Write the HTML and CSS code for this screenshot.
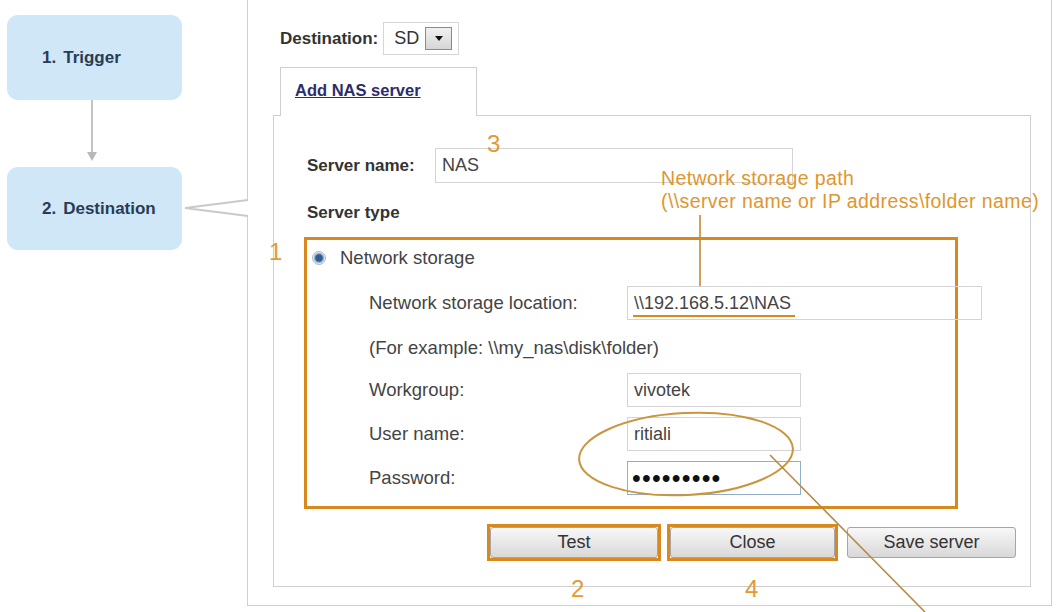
FILE: index.html
```html
<!DOCTYPE html>
<html>
<head>
<meta charset="utf-8">
<link rel="stylesheet" href="styles.css">
</head>
<body>
<div class="page">
  <aside class="flow">
    <div class="step step-1"><span class="step-num">1.</span>Trigger</div>
    <div class="flow-arrow"></div>
    <div class="step step-2"><span class="step-num">2.</span>Destination</div>
  </aside>

  <section class="panel">
    <div class="dest-row">
      <span class="label-b">Destination:</span>
      <span class="select"><span class="select-val">SD</span><span class="select-btn"><i class="caret"></i></span></span>
    </div>
    <div class="tabs"><div class="tab"><a href="#" class="tab-link">Add NAS server</a></div></div>
    <div class="tab-panel">
      <div class="server-row">
        <label class="label-b server-label">Server name:</label>
        <input class="field-input server-input" type="text" value="NAS" readonly>
      </div>
      <div class="label-b server-type">Server type</div>
      <div class="group">
        <div class="radio-row"><span class="radio"></span>Network storage</div>
        <div class="field-row row-location">
          <span class="field-label">Network storage location:</span>
          <input class="field-input location-input" type="text" value="\\192.168.5.12\NAS" readonly>
        </div>
        <div class="example">(For example: \\my_nas\disk\folder)</div>
        <div class="field-row row-workgroup">
          <span class="field-label">Workgroup:</span>
          <input class="field-input short-input" type="text" value="vivotek" readonly>
        </div>
        <div class="field-row row-user">
          <span class="field-label">User name:</span>
          <input class="field-input short-input" type="text" value="ritiali" readonly>
        </div>
        <div class="field-row row-pass">
          <span class="field-label">Password:</span>
          <div class="field-input short-input pass-input">•••••••••</div>
        </div>
      </div>
      <div class="buttons">
        <span class="mark mark-test"><button class="btn btn-test">Test</button></span>
        <span class="mark mark-close"><button class="btn btn-close">Close</button></span>
        <button class="btn btn-save">Save server</button>
      </div>
    </div>
  </section>

  <svg class="overlay" width="1062" height="612" viewBox="0 0 1062 612">
    <rect x="245" y="201" width="4" height="14" fill="#ffffff"/>
    <polyline points="248,200 185,208 248,216" fill="none" stroke="#c9c9c9" stroke-width="2"/>
    <line x1="700" y1="215" x2="700" y2="286" stroke="#c48a35" stroke-width="1.6"/>
    <line x1="633" y1="316" x2="795" y2="316" stroke="#d8881c" stroke-width="2"/>
    <ellipse cx="686" cy="454" rx="107" ry="41" transform="rotate(-3 686 454)" fill="none" stroke="#c9953f" stroke-width="2"/>
    <line x1="770" y1="455" x2="925" y2="612" stroke="#b98a45" stroke-width="1.6"/>
  </svg>

  <span class="anno anno-1">1</span>
  <span class="anno anno-2">2</span>
  <span class="anno anno-3">3</span>
  <span class="anno anno-4">4</span>
  <div class="callout">Network storage path<br>(\\server name or IP address\folder name)</div>
</div>
</body>
</html>
```
FILE: styles.css
```css
* { box-sizing: border-box; }

body {
  margin: 0;
  background: #ffffff;
  font-family: "Liberation Sans", Arial, sans-serif;
  color: #444444;
}

.page {
  position: relative;
  width: 1062px;
  height: 612px;
  display: flex;
  overflow: hidden;
}

/* ---------- flow chart ---------- */
.flow {
  width: 247px;
  flex: none;
  padding: 15px 0 0 7px;
  display: flex;
  flex-direction: column;
}

.step {
  width: 175px;
  height: 85px;
  background: #cfe7f7;
  border-radius: 11px;
  display: flex;
  align-items: center;
  padding-left: 35px;
  font-weight: bold;
  font-size: 17px;
  color: #2a3b55;
}

.step-2 { height: 83px; }

.step-num { margin-right: 7px; }

.flow-arrow {
  width: 175px;
  height: 67px;
  position: relative;
}

.flow-arrow::before {
  content: "";
  position: absolute;
  left: 84px;
  top: 0;
  width: 2px;
  height: 53px;
  background: #c4c4c4;
}

.flow-arrow::after {
  content: "";
  position: absolute;
  left: 80px;
  top: 52px;
  border-top: 9px solid #b9b9b9;
  border-left: 5px solid transparent;
  border-right: 5px solid transparent;
}

/* ---------- main panel ---------- */
.panel {
  width: 805px;
  height: 606px;
  flex: none;
  border: 1px solid #cfcfcf;
  border-top: none;
  padding: 22px 0 0 25px;
  display: flex;
  flex-direction: column;
}

.label-b {
  font-weight: bold;
  font-size: 17px;
  color: #333333;
}

.dest-row {
  display: flex;
  align-items: center;
  height: 33px;
  margin-left: 7px;
  gap: 5px;
}

.select {
  width: 76px;
  height: 33px;
  border: 1px solid #d6d6d6;
  display: flex;
  align-items: center;
  padding-left: 10px;
  gap: 6px;
}

.select-val {
  font-size: 18px;
  color: #333333;
  width: 25px;
}

.select-btn {
  width: 27px;
  height: 23px;
  border: 1px solid #8a8a8a;
  background: linear-gradient(#f0f0f0, #d6d6d6);
  display: flex;
  align-items: center;
  justify-content: center;
}

.caret {
  display: block;
  border-top: 5px solid #111111;
  border-left: 4px solid transparent;
  border-right: 4px solid transparent;
}

.tabs {
  display: flex;
  margin: 12px 0 -1px 7px;
  position: relative;
  z-index: 1;
}

.tab {
  width: 197px;
  height: 49px;
  border: 1px solid #cfcfcf;
  border-bottom: none;
  background: #ffffff;
  padding: 13px 0 0 14px;
}

.tab-link {
  font-weight: bold;
  font-size: 16.5px;
  color: #2c2d6b;
  text-decoration: underline;
}

.tab-panel {
  width: 758px;
  height: 472px;
  border: 1px solid #cfcfcf;
  padding: 0 0 0 33px;
  display: flex;
  flex-direction: column;
  align-items: flex-start;
}

.server-row {
  display: flex;
  align-items: center;
  height: 35px;
  margin-top: 32px;
}

.server-label { width: 128px; }

.field-input {
  flex: none;
  height: 34px;
  border: 1px solid #d4d4d4;
  background: transparent;
  font-family: "Liberation Sans", Arial, sans-serif;
  font-size: 18px;
  color: #444444;
  padding: 0 6px;
  outline: none;
  margin: 0;
}

.server-input {
  width: 358px;
  height: 35px;
}

.server-type {
  margin-top: 19px;
  line-height: 22px;
}

.group {
  margin: 13px 0 0 -3px;
  width: 654px;
  height: 272px;
  border: 3px solid #d8881c;
  padding: 8px 0 0 5px;
  display: flex;
  flex-direction: column;
  font-size: 18.5px;
  color: #444444;
}

.radio-row {
  display: flex;
  align-items: center;
  height: 20px;
}

.radio {
  width: 14px;
  height: 14px;
  border-radius: 50%;
  border: 1px solid #b0bac4;
  background: radial-gradient(circle, #2d5d94 0 3px, #6d8fb5 4px, #dfe5ec 5.5px);
  margin-right: 14px;
}

.field-row {
  display: flex;
  align-items: center;
  padding-left: 57px;
  height: 34px;
}

.field-label { width: 258px; flex: none; }

.row-location { margin-top: 18px; }
.row-workgroup { margin-top: 15px; }
.row-user { margin-top: 10px; }
.row-pass { margin-top: 10px; }

.location-input { width: 355px; }
.short-input { width: 174px; }

.pass-input {
  display: flex;
  align-items: center;
  border-color: #8fb0c8;
  color: #111111;
  font-size: 25px;
  letter-spacing: 1.2px;
  padding-left: 4px;
}

.example {
  margin-top: 18px;
  padding-left: 57px;
  line-height: 20px;
}

.buttons {
  display: flex;
  align-items: center;
  margin: 15px 0 0 180px;
}

.mark {
  display: flex;
  border: 3px solid #d8881c;
}

.mark-close { margin-left: 6px; }

.btn {
  height: 31px;
  border: 1px solid #a6a6a6;
  border-radius: 3px;
  background: linear-gradient(#f8f8f8, #e8e8e8 50%, #d8d8d8);
  font-family: "Liberation Sans", Arial, sans-serif;
  font-size: 18px;
  color: #333333;
  padding: 0;
  margin: 0;
}

.btn-test { width: 168px; }
.btn-close { width: 165px; }
.btn-save { width: 169px; margin-left: 9px; }

/* ---------- annotations ---------- */
.overlay {
  position: absolute;
  left: 0;
  top: 0;
  pointer-events: none;
}

.anno {
  position: absolute;
  color: #e39a33;
  font-size: 24px;
  line-height: 1;
}

.anno-1 { left: 269px; top: 240px; }
.anno-2 { left: 571px; top: 577px; }
.anno-3 { left: 487px; top: 132px; }
.anno-4 { left: 745px; top: 577px; }

.callout {
  position: absolute;
  left: 661px;
  top: 167px;
  font-size: 19.5px;
  letter-spacing: 0.4px;
  line-height: 23px;
  color: #e0962e;
  white-space: nowrap;
}
```
